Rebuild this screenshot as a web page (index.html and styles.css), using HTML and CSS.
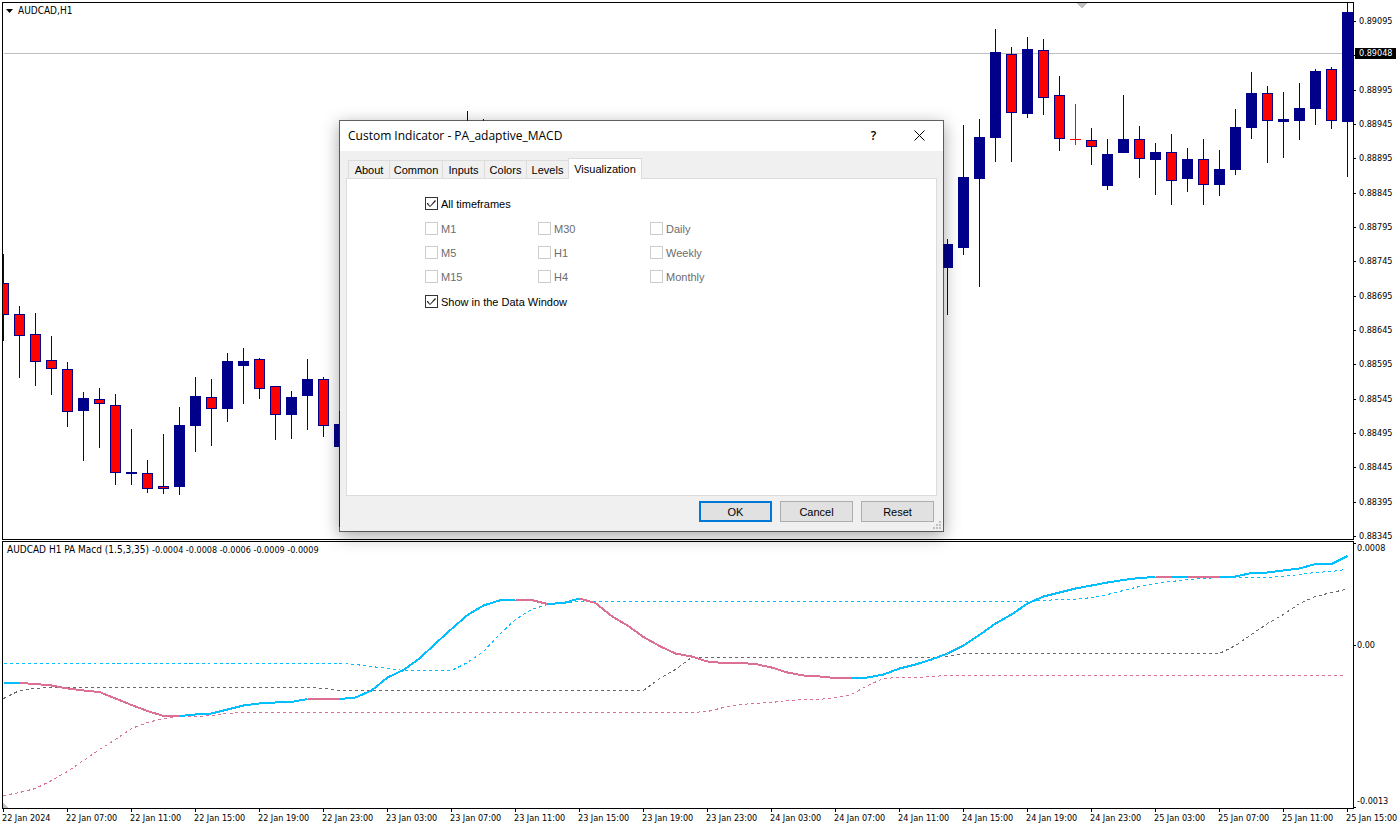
FILE: index.html
```
<!DOCTYPE html>
<html lang="en">
<head>
<meta charset="utf-8">
<title>AUDCAD,H1</title>
<link rel="stylesheet" href="styles.css">
</head>
<body>
<main class="terminal">
  <section class="pane" aria-label="AUDCAD H1 price chart">
    <svg class="plot" viewBox="2.5 2.5 1350 536" preserveAspectRatio="none" aria-hidden="true">
      <path class="price-line" d="M3 53H1352"/>
      <path class="marker" d="M1076 2.5H1087L1081.5 8z"/>
      <path class="wick" d="M3 254V340M19 306V377M35 313V385M51 336V394M67 362V426M83 392V460M99 388V447M115 394V484M131 429V484M147 460V492M163 434V493M179 407V494M195 377V451M211 379V445M227 353V421M243 348V403M259 358V398M275 386V439M291 391V438M307 359V429M323 377V436M339 411V526M467 111V140M483 119V140M947 239V314M963 125V254M979 119V286M995 29V161M1011 47V161M1027 37V117M1043 39V114M1059 76V150M1091 128V164M1107 139V189M1123 95V152M1139 126V177M1155 143V194M1171 134V204M1187 148V191M1203 139V204M1219 150V195M1235 109V174M1251 72V138M1267 86V162M1283 92V157M1299 83V139M1315 69V124M1331 67V128M1347 3V176"/>
      <path class="doji" d="M1075 104V144M1070 139H1080"/>
      <path class="bull" d="M78 398h10V410h-10zM126 472h10V473h-10zM174 425h10V486h-10zM190 396h10V425h-10zM222 361h10V408h-10zM238 361h10V365h-10zM286 397h10V414h-10zM302 379h10V395h-10zM334 424h10V446h-10zM942 244h10V267h-10zM958 177h10V247h-10zM974 137h10V178h-10zM990 52h10V137h-10zM1022 49h10V113h-10zM1102 154h10V185h-10zM1118 139h10V152h-10zM1150 152h10V159h-10zM1182 159h10V178h-10zM1214 169h10V184h-10zM1230 127h10V169h-10zM1246 93h10V127h-10zM1278 119h10V121h-10zM1294 108h10V120h-10zM1310 71h10V108h-10zM1342 12h10V121h-10z"/>
      <path class="bear" d="M-2 283h10V314h-10zM14 314h10V335h-10zM30 334h10V361h-10zM46 360h10V368h-10zM62 369h10V411h-10zM94 399h10V403h-10zM110 405h10V472h-10zM142 473h10V488h-10zM158 486h10V488h-10zM206 397h10V408h-10zM254 359h10V388h-10zM270 386h10V414h-10zM318 379h10V425h-10zM1006 54h10V112h-10zM1038 50h10V97h-10zM1054 95h10V138h-10zM1086 140h10V146h-10zM1134 139h10V158h-10zM1166 152h10V180h-10zM1198 159h10V184h-10zM1262 93h10V120h-10zM1326 69h10V120h-10z"/>
    </svg>
    <header class="pane-title">
      <svg class="menu-arrow" viewBox="0 0 7 4" aria-hidden="true"><path d="M0 0H7L3.5 4z"/></svg>
      <span>AUDCAD,H1</span>
    </header>
  </section>
  <div class="axis">
    <ol class="prices">
      <li>0.89095</li><li></li><li>0.88995</li><li>0.88945</li><li>0.88895</li><li>0.88845</li><li>0.88795</li><li>0.88745</li><li>0.88695</li><li>0.88645</li><li>0.88595</li><li>0.88545</li><li>0.88495</li><li>0.88445</li><li>0.88395</li><li>0.88345</li>
    </ol>
    <span class="price-tag">0.89048</span>
  </div>

  <section class="pane" aria-label="PA Macd indicator">
    <svg class="plot" viewBox="2.5 541.5 1350 266" preserveAspectRatio="none" aria-hidden="true">
      <path class="marker" d="M2.5 802.5L7.5 807.5H2.5z"/>
      <path class="band up" d="M3 663H339L355 664 371 666 387 668 403 670H451L467 662 483 651 499 634 515 619 531 609 547 604 563 603 579 601H1027L1043 600 1059 599H1075L1091 597 1107 594 1123 590 1139 586 1155 583 1171 581 1187 579 1203 578 1219 577H1267L1283 576 1299 574 1315 572 1331 571 1345 569"/>
      <path class="band mid" d="M3 698L19 690 35 688 51 687H307L323 688 339 690H643L659 678 675 669 691 657H931L947 656 963 653H1219L1235 645 1251 634 1267 623 1283 614 1299 603 1315 596 1331 592 1345 589"/>
      <path class="band down" d="M3 795L19 792 35 788 51 780 67 771 83 760 99 749 115 739 131 728 147 722 163 718 179 716H195L211 715 227 713 243 712H691L707 711 723 707 739 704 755 703 771 702 787 700 803 699H819L835 697 851 694 867 685 883 678 899 677H915L931 676 947 675H1345"/>
      <path class="macd up" d="M3 682.5H19M179 715.5L195 714 211 713 227 709 243 705 259 703 275 702 291 701.5 307 698.5M339 698.5L355 697 371 690 387 677 403 669.5 419 658 435 643 451 628.5 467 614.5 483 605 499 600 515 599.5M547 603.5L563 602.5 579 598M851 677.5L867 677 883 674 899 668 915 664 931 659 947 653 963 645 979 634.5 995 623 1011 614 1027 603 1043 596 1059 592 1075 588 1091 585 1107 582 1123 579.5 1139 577.5 1155 576.5M1171 576.5H1187M1219 576.5L1235 576 1251 572.5 1267 572 1283 570 1299 568 1315 563.5H1331L1347 555.5"/>
      <path class="macd down" d="M19 682.5L35 683.5 51 685 67 688 83 690 99 691.5 115 698 131 704.5 147 710.5 163 715.5H179M307 698.5H339M515 599.5H531L547 603.5M579 598L595 602.5 611 615.5 627 625 643 636.5 659 645.5 675 653 691 656 707 661 723 662.5H739L755 663.5 771 667 787 672 803 675 819 676 835 677.5H851M1155 576.5H1171M1187 576.5H1219"/>
    </svg>
    <header class="pane-title indicator-title"><span>AUDCAD H1 PA Macd (1.5,3,35)</span> <span class="values">-0.0004 -0.0008 -0.0006 -0.0009 -0.0009</span></header>
  </section>
  <ol class="axis levels">
    <li>0.0008</li><li>0.00</li><li>-0.0013</li>
  </ol>

  <ol class="times">
    <li>22 Jan 2024</li><li>22 Jan 07:00</li><li>22 Jan 11:00</li><li>22 Jan 15:00</li><li>22 Jan 19:00</li><li>22 Jan 23:00</li><li>23 Jan 03:00</li><li>23 Jan 07:00</li><li>23 Jan 11:00</li><li>23 Jan 15:00</li><li>23 Jan 19:00</li><li>23 Jan 23:00</li><li>24 Jan 03:00</li><li>24 Jan 07:00</li><li>24 Jan 11:00</li><li>24 Jan 15:00</li><li>24 Jan 19:00</li><li>24 Jan 23:00</li><li>25 Jan 03:00</li><li>25 Jan 07:00</li><li>25 Jan 11:00</li><li>25 Jan 15:00</li>
  </ol>
</main>

<form class="dialog" role="dialog" aria-labelledby="dialog-title">
  <header class="titlebar">
    <h1 id="dialog-title">Custom Indicator - PA_adaptive_MACD</h1>
    <button type="button" class="caption" aria-label="Help">?</button>
    <button type="button" class="caption" aria-label="Close">
      <svg class="cross" viewBox="0 0 11 11" aria-hidden="true"><path d="M.5 .5l10 10M10.5 .5l-10 10"/></svg>
    </button>
  </header>
  <div class="tabs" role="tablist">
    <button type="button" role="tab" class="tab">About</button>
    <button type="button" role="tab" class="tab wide">Common</button>
    <button type="button" role="tab" class="tab">Inputs</button>
    <button type="button" role="tab" class="tab">Colors</button>
    <button type="button" role="tab" class="tab">Levels</button>
    <button type="button" role="tab" class="tab active" aria-selected="true">Visualization</button>
  </div>
  <div class="panel" role="tabpanel">
    <label class="check"><input type="checkbox" checked>All timeframes</label>
    <div class="frames">
      <label class="check"><input type="checkbox" disabled>M1</label>
      <label class="check"><input type="checkbox" disabled>M30</label>
      <label class="check"><input type="checkbox" disabled>Daily</label>
      <label class="check"><input type="checkbox" disabled>M5</label>
      <label class="check"><input type="checkbox" disabled>H1</label>
      <label class="check"><input type="checkbox" disabled>Weekly</label>
      <label class="check"><input type="checkbox" disabled>M15</label>
      <label class="check"><input type="checkbox" disabled>H4</label>
      <label class="check"><input type="checkbox" disabled>Monthly</label>
    </div>
    <label class="check"><input type="checkbox" checked>Show in the Data Window</label>
  </div>
  <footer class="actions">
    <button type="button" class="action primary">OK</button>
    <button type="button" class="action">Cancel</button>
    <button type="button" class="action">Reset</button>
  </footer>
  <svg class="grip" viewBox="0 0 8 8" aria-hidden="true"><path d="M6 0h2v2H6zM3 3h2v2H3zM6 3h2v2H6zM0 6h2v2H0zM3 6h2v2H3zM6 6h2v2H6z"/></svg>
</form>
</body>
</html>
```
FILE: styles.css
```
* {
  box-sizing: border-box;
}

body {
  margin: 0;
  overflow: hidden;
  background: #fff;
  color: #000;
  font-family: "DejaVu Sans Condensed", "DejaVu Sans", sans-serif;
  font-size: 9px;
  line-height: 12px;
}

ol {
  margin: 0;
  padding: 0;
  list-style: none;
}

button {
  margin: 0;
  padding: 0;
  border: 0;
  background: none;
  color: inherit;
  font: inherit;
}

/* Chart window */
.terminal {
  display: grid;
  grid-template-columns: minmax(0, 1fr) 44px;
  grid-template-rows: minmax(0, 538fr) minmax(0, 268fr) 19px;
  row-gap: 1px;
  height: 100vh;
  padding: 2px 0 0 2px;
}

.pane {
  position: relative;
  border: 1px solid #000;
}

.plot {
  display: block;
  width: 100%;
  height: 100%;
  fill: none;
  shape-rendering: crispEdges;
}

.pane-title {
  position: absolute;
  top: 2px;
  left: 3px;
  display: flex;
  align-items: center;
  gap: 5px;
  font-size: 10px;
  white-space: nowrap;
}

.indicator-title {
  left: 4px;
  gap: 3px;
}

.values {
  font-size: 9px;
}

.menu-arrow {
  width: 7px;
  height: 4px;
}

.price-line { stroke: #c0c0c0; }
.marker { fill: #c0c0c0; }
.wick { stroke: #00008b; stroke-linecap: square; }
.doji { stroke: #f00; stroke-linecap: square; }
.bull { stroke: #00008b; fill: #00008b; }
.bear { stroke: #00008b; fill: #f00; }
.band { stroke-dasharray: 3 3; }
.macd { stroke-width: 2; stroke-linejoin: round; }
.up { stroke: #00bfff; }
.mid { stroke: #696969; }
.down { stroke: #db7093; }

/* Scales */
.axis {
  position: relative;
  white-space: nowrap;
}

.prices {
  display: flex;
  flex-direction: column;
  justify-content: space-between;
  height: calc(100% + 2px);
  padding-top: 13px;
}

.prices li {
  position: relative;
  height: 12px;
  padding-left: 5px;
}

.prices li::before,
.levels li::before {
  content: "";
  position: absolute;
  top: 6px;
  left: 0;
  width: 2px;
  height: 1px;
  background: #000;
}

.price-tag {
  position: absolute;
  top: 46px;
  left: 1px;
  width: 41px;
  padding-left: 4px;
  background: #000;
  color: #fff;
  line-height: 11px;
}

.levels {
  display: grid;
  grid-template-rows: 97fr 156fr 12px;
  padding: 1px 0 2px;
}

.levels li {
  position: relative;
  padding-left: 3px;
}

.levels li:first-child::before { top: 1px; }
.levels li:last-child::before { top: 12px; }

.times {
  grid-column: 1 / -1;
  display: grid;
  grid-template-columns: repeat(21, minmax(0, 1fr)) 52px;
  margin-top: -1px;
  white-space: nowrap;
}

.times li {
  position: relative;
  padding-top: 3px;
}

.times li::before {
  content: "";
  position: absolute;
  top: 0;
  left: 1px;
  width: 1px;
  height: 3px;
  background: #000;
}

/* Indicator properties window */
.dialog {
  position: absolute;
  top: 120px;
  left: 339px;
  display: flex;
  flex-direction: column;
  width: 605px;
  height: 412px;
  border: 1px solid rgba(40, 40, 40, 0.7);
  background: #f0f0f0;
  background-clip: padding-box;
  box-shadow: 0 4px 16px rgba(0, 0, 0, 0.35);
  font-family: "Liberation Sans", Arial, sans-serif;
  font-size: 11px;
  line-height: 14px;
}

.titlebar {
  display: flex;
  align-items: flex-start;
  height: 30px;
  padding-left: 8px;
  background: #fff;
  font-family: "Open Sans", "Noto Sans", sans-serif;
  font-size: 12px;
}

.titlebar h1 {
  flex: 1;
  margin: 0;
  font-size: 12px;
  font-weight: 400;
  line-height: 30px;
}

.caption {
  display: flex;
  align-items: center;
  justify-content: center;
  width: 45px;
  height: 29px;
  font-weight: 600;
}

.caption:last-child {
  width: 47px;
}

.cross {
  width: 11px;
  height: 11px;
  stroke: #000;
}

.tabs {
  display: flex;
  align-items: flex-end;
  height: 27px;
  padding-left: 8px;
}

.tab {
  flex: none;
  width: 42px;
  height: 18px;
  border: 1px solid #dcdcdc;
  border-width: 1px 0 0 1px;
}

.tab:first-child {
  width: 41px;
}

.tab.wide {
  width: 53px;
}

.tab.active {
  z-index: 1;
  width: 74px;
  height: 21px;
  margin-bottom: -1px;
  border-right-width: 1px;
  background: #fff;
}

.panel {
  flex: 1;
  display: flex;
  flex-direction: column;
  align-items: flex-start;
  gap: 12px;
  margin: 0 6px;
  padding: 18px 0 0 78px;
  border: 1px solid #dcdcdc;
  background: #fff;
}

.frames {
  display: grid;
  grid-template-columns: 113px 112px 112px;
  row-gap: 11px;
  color: #6d6d6d;
}

.check {
  display: flex;
  align-items: center;
  gap: 3px;
  height: 13px;
  white-space: nowrap;
}

.check input {
  appearance: none;
  width: 13px;
  height: 13px;
  margin: 0;
  border: 1px solid #333;
  background: #fff;
}

.check input:disabled {
  border-color: #ccc;
}

.check input:checked::before {
  content: "";
  display: block;
  width: 11px;
  height: 11px;
  background: #222;
  clip-path: polygon(1px 5px, 2px 5px, 4px 8px, 9px 2px, 10px 3px, 4px 9px, 1px 6px);
}

.actions {
  display: flex;
  justify-content: flex-end;
  gap: 8px;
  padding: 5px 9px 9px;
}

.action {
  width: 73px;
  height: 21px;
  border: 1px solid #adadad;
  background: #e1e1e1;
}

.action.primary {
  border: 2px solid #0078d7;
}

.grip {
  position: absolute;
  right: 2px;
  bottom: 2px;
  width: 8px;
  height: 8px;
  fill: #bfbfbf;
}
```
